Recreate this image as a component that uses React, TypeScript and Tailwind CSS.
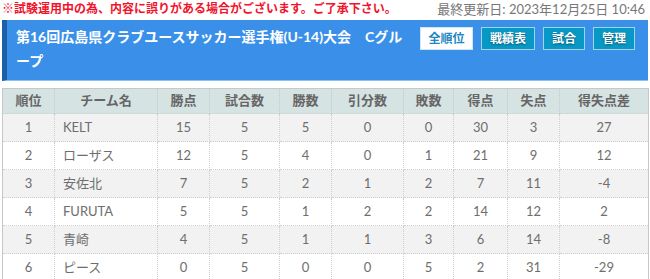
import React from 'react';

const rows = [
  ['1', 'KELT', '15', '5', '5', '0', '0', '30', '3', '27'],
  ['2', 'ローザス', '12', '5', '4', '0', '1', '21', '9', '12'],
  ['3', '安佐北', '7', '5', '2', '1', '2', '7', '11', '-4'],
  ['4', 'FURUTA', '5', '5', '1', '2', '2', '14', '12', '2'],
  ['5', '青崎', '4', '5', '1', '1', '3', '6', '14', '-8'],
  ['6', 'ピース', '0', '5', '0', '0', '5', '2', '31', '-29'],
];

const heads = ['順位', 'チーム名', '勝点', '試合数', '勝数', '引分数', '敗数', '得点', '失点', '得失点差'];
const widths = [52, 103, 52, 70, 52, 72, 50, 54, 52, 89];

export default function App() {
  return (
    <div
      className="w-[650px] h-[279px] overflow-hidden bg-white px-[2px]"
      style={{ fontFamily: 'Lato, "Noto Sans CJK JP", sans-serif' }}
    >
      {/* Notice */}
      <div className="flex justify-between items-center h-[18px] text-[12px] leading-[18px]">
        <span className="text-[#f0142d] font-bold">※試験運用中の為、内容に誤りがある場合がございます。ご了承下さい。</span>
        <span className="text-[#777] text-[13px] pr-[3px]">最終更新日: 2023年12月25日 10:46</span>
      </div>

      {/* Header */}
      <div className="mt-[2px] h-[61px] flex bg-[#3a90e8] border-l-[5px] border-[#1c5ea8] border-b border-b-[#8cc0f2]">
        <h1 className="flex-1 min-w-0 break-all pl-[9px] pr-[2px] pt-[5px] text-white font-bold text-[14px] leading-[24px]">
          第16回広島県クラブユースサッカー選手権(U-14)大会　Cグループ
        </h1>
        <div className="shrink-0 flex gap-[8px] pt-[7px] pl-[4px] pr-[13px]">
          <button className="h-[23px] w-[53px] bg-white border border-[#cfe6f7] text-[#1f86c4] font-bold text-[12px]">全順位</button>
          <button className="h-[23px] w-[54px] bg-[#0898c6] border border-[#9fd3ee] text-white font-bold text-[12px] [text-shadow:0_1px_2px_rgba(0,0,0,0.45)]">戦績表</button>
          <button className="h-[23px] w-[42px] bg-[#0898c6] border border-[#9fd3ee] text-white font-bold text-[12px] [text-shadow:0_1px_2px_rgba(0,0,0,0.45)]">試合</button>
          <button className="h-[23px] w-[42px] bg-[#0898c6] border border-[#9fd3ee] text-white font-bold text-[12px] [text-shadow:0_1px_2px_rgba(0,0,0,0.45)]">管理</button>
        </div>
      </div>

      {/* Standings */}
      <table className="mt-[7px] w-[646px] table-fixed border-collapse border border-[#c8c8c8] text-[13px] text-[#6e6e6e]">
        <colgroup>
          {widths.map((w, i) => (
            <col key={i} style={{ width: w }} />
          ))}
        </colgroup>
        <thead>
          <tr className="bg-[#d6e3e3] h-[25px]">
            {heads.map((h) => (
              <th key={h} className="font-bold text-[#666] border-r border-dotted border-[#c8c8c8] text-center">
                {h}
              </th>
            ))}
          </tr>
        </thead>
        <tbody>
          {rows.map((r, i) => (
            <tr key={i} className={`h-[28px] ${i % 2 === 0 ? 'bg-[#f2f2f2]' : 'bg-white'}`}>
              {r.map((c, j) => (
                <td
                  key={j}
                  className={`border border-dotted border-[#cfcfcf] ${j === 1 ? 'text-left pl-[8px]' : 'text-center'}`}
                >
                  {c}
                </td>
              ))}
            </tr>
          ))}
        </tbody>
      </table>
    </div>
  );
}
